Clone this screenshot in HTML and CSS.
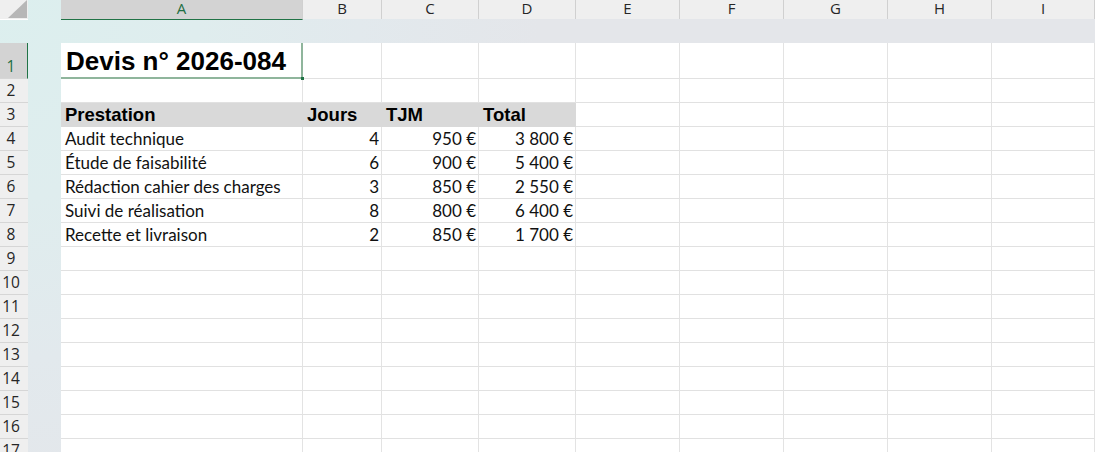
FILE: index.html
```html
<!DOCTYPE html>
<html lang="fr">
<head>
<meta charset="utf-8">
<title>Devis n° 2026-084</title>
<link rel="stylesheet" href="styles.css">
</head>
<body>
<div class="sheet">
  <div class="hband"></div>
  <div class="vband"></div>
  <div class="corner">
    <svg width="28" height="19" viewBox="0 0 28 19"><polygon points="27,0 27,18 8,18" fill="#b7b7b7"/></svg>
  </div>
  <div class="colheads">
    <div class="ch sel">A</div>
    <div class="ch">B</div>
    <div class="ch">C</div>
    <div class="ch">D</div>
    <div class="ch">E</div>
    <div class="ch">F</div>
    <div class="ch">G</div>
    <div class="ch">H</div>
    <div class="ch">I</div>
  </div>
  <div class="rowheads">
    <div class="rh tall sel">1</div>
    <div class="rh">2</div>
    <div class="rh">3</div>
    <div class="rh">4</div>
    <div class="rh">5</div>
    <div class="rh">6</div>
    <div class="rh">7</div>
    <div class="rh">8</div>
    <div class="rh">9</div>
    <div class="rh">10</div>
    <div class="rh">11</div>
    <div class="rh">12</div>
    <div class="rh">13</div>
    <div class="rh">14</div>
    <div class="rh">15</div>
    <div class="rh">16</div>
    <div class="rh">17</div>
  </div>
  <div class="cells">
    <div class="row tall">
      <div class="c title">Devis n° 2026-084</div>
      <div class="c"></div><div class="c"></div><div class="c"></div><div class="c"></div><div class="c"></div><div class="c"></div><div class="c"></div><div class="c"></div>
    </div>
    <div class="row">
      <div class="c"></div><div class="c"></div><div class="c"></div><div class="c"></div><div class="c"></div><div class="c"></div><div class="c"></div><div class="c"></div><div class="c"></div>
    </div>
    <div class="row">
      <div class="c hd">Prestation</div>
      <div class="c hd">Jours</div>
      <div class="c hd">TJM</div>
      <div class="c hd">Total</div>
      <div class="c"></div><div class="c"></div><div class="c"></div><div class="c"></div><div class="c"></div>
    </div>
    <div class="row">
      <div class="c tx">Audit technique</div>
      <div class="c tx num">4</div>
      <div class="c tx num">950&nbsp;€</div>
      <div class="c tx num">3&#8239;800&nbsp;€</div>
      <div class="c"></div><div class="c"></div><div class="c"></div><div class="c"></div><div class="c"></div>
    </div>
    <div class="row">
      <div class="c tx">Étude de faisabilité</div>
      <div class="c tx num">6</div>
      <div class="c tx num">900&nbsp;€</div>
      <div class="c tx num">5&#8239;400&nbsp;€</div>
      <div class="c"></div><div class="c"></div><div class="c"></div><div class="c"></div><div class="c"></div>
    </div>
    <div class="row">
      <div class="c tx">Rédaction cahier des charges</div>
      <div class="c tx num">3</div>
      <div class="c tx num">850&nbsp;€</div>
      <div class="c tx num">2&#8239;550&nbsp;€</div>
      <div class="c"></div><div class="c"></div><div class="c"></div><div class="c"></div><div class="c"></div>
    </div>
    <div class="row">
      <div class="c tx">Suivi de réalisation</div>
      <div class="c tx num">8</div>
      <div class="c tx num">800&nbsp;€</div>
      <div class="c tx num">6&#8239;400&nbsp;€</div>
      <div class="c"></div><div class="c"></div><div class="c"></div><div class="c"></div><div class="c"></div>
    </div>
    <div class="row">
      <div class="c tx">Recette et livraison</div>
      <div class="c tx num">2</div>
      <div class="c tx num">850&nbsp;€</div>
      <div class="c tx num">1&#8239;700&nbsp;€</div>
      <div class="c"></div><div class="c"></div><div class="c"></div><div class="c"></div><div class="c"></div>
    </div>
    <div class="row"><div class="c"></div><div class="c"></div><div class="c"></div><div class="c"></div><div class="c"></div><div class="c"></div><div class="c"></div><div class="c"></div><div class="c"></div></div>
    <div class="row"><div class="c"></div><div class="c"></div><div class="c"></div><div class="c"></div><div class="c"></div><div class="c"></div><div class="c"></div><div class="c"></div><div class="c"></div></div>
    <div class="row"><div class="c"></div><div class="c"></div><div class="c"></div><div class="c"></div><div class="c"></div><div class="c"></div><div class="c"></div><div class="c"></div><div class="c"></div></div>
    <div class="row"><div class="c"></div><div class="c"></div><div class="c"></div><div class="c"></div><div class="c"></div><div class="c"></div><div class="c"></div><div class="c"></div><div class="c"></div></div>
    <div class="row"><div class="c"></div><div class="c"></div><div class="c"></div><div class="c"></div><div class="c"></div><div class="c"></div><div class="c"></div><div class="c"></div><div class="c"></div></div>
    <div class="row"><div class="c"></div><div class="c"></div><div class="c"></div><div class="c"></div><div class="c"></div><div class="c"></div><div class="c"></div><div class="c"></div><div class="c"></div></div>
    <div class="row"><div class="c"></div><div class="c"></div><div class="c"></div><div class="c"></div><div class="c"></div><div class="c"></div><div class="c"></div><div class="c"></div><div class="c"></div></div>
    <div class="row"><div class="c"></div><div class="c"></div><div class="c"></div><div class="c"></div><div class="c"></div><div class="c"></div><div class="c"></div><div class="c"></div><div class="c"></div></div>
    <div class="row"><div class="c"></div><div class="c"></div><div class="c"></div><div class="c"></div><div class="c"></div><div class="c"></div><div class="c"></div><div class="c"></div><div class="c"></div></div>
  </div>
</div>
</body>
</html>
```

FILE: styles.css
```css
* { box-sizing: border-box; }

html, body {
  margin: 0;
  padding: 0;
  background: #ffffff;
  overflow: hidden;
}

.sheet {
  width: 1095px;
  height: 452px;
  overflow: hidden;
  display: grid;
  grid-template-columns: 28px 33px 1fr;
  grid-template-rows: 20px 23px 1fr;
  font-family: "Lato", "Liberation Sans", sans-serif;
  color: #000;
}

.hband, .vband, .colheads {
  background: radial-gradient(circle at 0 0, #dcefee 0, #dfedee 200px, #e2e9ed 360px, #e4e6ea 540px) fixed;
}

.hband { grid-column: 1 / 4; grid-row: 2; }
.vband { grid-column: 2; grid-row: 1 / 4; }

.corner {
  grid-column: 1;
  grid-row: 1;
  background: #efefef;
  height: 19px;
  display: flex;
}

.colheads {
  grid-column: 3;
  grid-row: 1;
  display: grid;
  grid-template-columns: 242px 79px 97px 97px 104px 104px 104px 104px 1fr;
  align-items: start;
}

.ch {
  height: 19px;
  background: #efefef;
  border-right: 1px solid #d0d0d0;
  display: flex;
  align-items: center;
  justify-content: center;
  padding-bottom: 2px;
  font-family: "Open Sans", "Noto Sans", sans-serif;
  font-size: 15px;
  line-height: 17px;
  color: #262626;
}

.ch.sel {
  height: 20px;
  background: #d3d3d3;
  color: #1e6e42;
  border-bottom: 1px solid #217346;
  padding-bottom: 3px;
}

.rowheads {
  grid-column: 1;
  grid-row: 3;
  display: flex;
  flex-direction: column;
}

.rh {
  flex: none;
  height: 24px;
  background: #efefef;
  border-bottom: 1px solid #d6d6d6;
  display: flex;
  align-items: flex-end;
  justify-content: center;
  padding-right: 6px;
  font-family: "Open Sans", "Noto Sans", sans-serif;
  font-size: 15.5px;
  line-height: 23px;
  color: #262626;
}

.rh.tall { height: 36px; }

.rh.sel {
  background: #d3d3d3;
  color: #1e6e42;
  border-right: 1px solid #217346;
  padding-right: 5px;
}

.cells {
  grid-column: 3;
  grid-row: 3;
  display: flex;
  flex-direction: column;
}

.row {
  flex: none;
  display: grid;
  grid-template-columns: 242px 79px 97px 97px 104px 104px 104px 104px 1fr;
  height: 24px;
}

.row.tall { height: 36px; }

.c {
  border-right: 1px solid #e3e3e3;
  border-bottom: 1px solid #e1e1e1;
  display: flex;
  align-items: flex-end;
  white-space: nowrap;
  overflow: hidden;
}

.title {
  position: relative;
  overflow: visible;
  border-right: 2px solid #8fb59c;
  border-bottom: 2px solid #8fb59c;
  padding: 0 0 1px 5px;
  font-family: "Liberation Sans", Arial, sans-serif;
  font-weight: bold;
  font-size: 26px;
  line-height: 30px;
}

.title::after {
  content: "";
  position: absolute;
  right: -3px;
  bottom: -3px;
  width: 3px;
  height: 3px;
  background: #217346;
}

.hd {
  background: #d9d9d9;
  border-color: #d9d9d9;
  padding: 0 0 1px 4px;
  font-family: "Liberation Sans", Arial, sans-serif;
  font-weight: bold;
  font-size: 18.5px;
  line-height: 20px;
}

.tx {
  padding: 0 2px 1px 4px;
  font-size: 17px;
  line-height: 20px;
  color: #111;
}

.num { justify-content: flex-end; }
```
